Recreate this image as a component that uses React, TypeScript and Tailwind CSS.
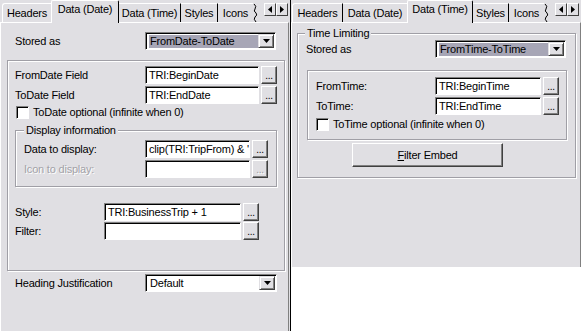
import React from "react";

const BG = "bg-[#e0dfe3]";

function Sunken({ className = "", children }: { className?: string; children?: React.ReactNode }) {
  return (
    <div
      className={`border border-t-[#808080] border-l-[#808080] border-r-white border-b-white shadow-[inset_1px_1px_0_#000] bg-white flex items-center ${className}`}
    >
      {children}
    </div>
  );
}

function Ellipsis({ disabled = false }: { disabled?: boolean }) {
  return (
    <div
      className={`w-[16px] h-[18px] shrink-0 ${BG} border border-t-white border-l-white border-r-[#404040] border-b-[#404040] shadow-[inset_-1px_-1px_0_#808080] flex items-end justify-center pb-[2px] text-[10px] leading-none ${
        disabled ? "text-[#9d9da1] [text-shadow:1px_1px_0_#fff]" : "text-black"
      }`}
    >
      ...
    </div>
  );
}

function DropBtn() {
  return (
    <div
      className={`w-[16px] h-full shrink-0 ${BG} border border-t-[#e0dfe3] border-l-[#e0dfe3] border-r-[#404040] border-b-[#404040] shadow-[inset_1px_1px_0_#fff,inset_-1px_-1px_0_#808080] flex items-center justify-center`}
    >
      <svg width="7" height="4" viewBox="0 0 7 4">
        <path d="M0 0h7L3.5 4z" fill="#000" />
      </svg>
    </div>
  );
}

function Select({ value, highlight = false, className = "" }: { value: string; highlight?: boolean; className?: string }) {
  return (
    <Sunken className={`h-[18px] pl-[2px] pr-[1px] py-[1px] items-stretch ${className}`}>
      <div className={`flex-1 flex items-center pl-[1px] ml-[1px] mt-[1px] ${highlight ? "bg-[#a7a6b6]" : ""}`}>
        {value}
      </div>
      <DropBtn />
    </Sunken>
  );
}

function Field({
  label,
  labelW,
  inputW,
  value = "",
  disabled = false,
  className = "",
}: {
  label: string;
  labelW: string;
  inputW: string;
  value?: string;
  disabled?: boolean;
  className?: string;
}) {
  return (
    <div className={`flex items-center h-[18px] ${className}`}>
      <div className={`${labelW} shrink-0 ${disabled ? "text-[#a3a2a8] [text-shadow:1px_1px_0_#fff]" : ""}`}>{label}</div>
      <Sunken className={`${inputW} h-[18px] pl-[3px] overflow-hidden whitespace-nowrap`}>{value}</Sunken>
      <div className="w-[2px]" />
      <Ellipsis disabled={disabled} />
    </div>
  );
}

function Check({ label, className = "" }: { label: string; className?: string }) {
  return (
    <div className={`flex items-center h-[13px] ${className}`}>
      <div className="w-[13px] h-[13px] bg-white border border-t-[#808080] border-l-[#808080] border-r-white border-b-white shadow-[inset_1px_1px_0_#000]" />
      <span className="ml-[4px]">{label}</span>
    </div>
  );
}

function Group({
  caption,
  className = "",
  captionLeft = "left-[8px]",
  children,
}: {
  caption?: string;
  className?: string;
  captionLeft?: string;
  children?: React.ReactNode;
}) {
  return (
    <div
      className={`relative border border-[#a09fa6] shadow-[inset_1px_1px_0_#fff,1px_1px_0_#fff] ${className}`}
    >
      {caption && (
        <span className={`absolute ${captionLeft} top-[-7px] px-[2px] ${BG} leading-[12px]`}>{caption}</span>
      )}
      {children}
    </div>
  );
}

type TabDef = { label: string; w: string };

function TabStrip({ tabs, active, first }: { tabs: TabDef[]; active: number; first: string }) {
  return (
    <div className="h-[22px] flex items-end relative z-10">
      <div className={first} />
      {tabs.map((t, i) =>
        i === active ? (
          <div
            key={t.label}
            className={`${t.w} h-[23px] -mb-px ${BG} border-l border-t border-white border-r border-r-black rounded-t-[2px] flex justify-center pt-[3px] shrink-0`}
          >
            {t.label}
          </div>
        ) : (
          <div
            key={t.label}
            className={`${t.w} h-[19px] ${BG} border-t border-white ${i === 0 ? "border-l rounded-tl-[3px]" : ""} ${
              i + 1 === active ? "" : "border-r border-r-black"
            } ${i === tabs.length - 1 ? "border-r-0" : ""} flex justify-center pt-[4px] shrink-0`}
          >
            {t.label}
          </div>
        )
      )}
      <svg width="5" height="19" viewBox="0 0 5 19" className="shrink-0">
        <path d="M1 1 Q4 3 2 6 Q0 8 3 10 Q5 12 2 14 Q0 16 3 19" stroke="#000" fill="none" strokeWidth="1" />
      </svg>
      <div className="flex-1" />
      <div className="flex self-start mt-[3px] mr-[2px]">
        {[0, 1].map((k) => (
          <div
            key={k}
            className={`w-[12px] h-[13px] ${BG} border border-t-white border-l-white border-r-[#404040] border-b-[#404040] flex items-center justify-center`}
          >
            <svg width="4" height="7" viewBox="0 0 4 7">
              {k === 0 ? <path d="M4 0v7L0 3.5z" fill="#000" /> : <path d="M0 0v7l4-3.5z" fill="#000" />}
            </svg>
          </div>
        ))}
      </div>
    </div>
  );
}

export default function App() {
  const leftTabs: TabDef[] = [
    { label: "Headers", w: "w-[49px]" },
    { label: "Data (Date)", w: "w-[68px]" },
    { label: "Data (Time)", w: "w-[62px]" },
    { label: "Styles", w: "w-[37px]" },
    { label: "Icons", w: "w-[35px]" },
  ];
  const rightTabs: TabDef[] = [
    { label: "Headers", w: "w-[51px]" },
    { label: "Data (Date)", w: "w-[64px]" },
    { label: "Data (Time)", w: "w-[66px]" },
    { label: "Styles", w: "w-[36px]" },
    { label: "Icons", w: "w-[35px]" },
  ];
  return (
    <div className="w-[581px] h-[331px] flex bg-white font-['Liberation_Sans',Arial,sans-serif] text-[11px] tracking-[-0.2px] leading-none text-black overflow-hidden">
      {/* Left panel */}
      <div className={`w-[290px] h-[331px] ${BG} flex flex-col shrink-0`}>
        <TabStrip tabs={leftTabs} active={1} first="w-[2px]" />
        <div className="w-[289px] flex-1 border-l border-t border-white border-r border-r-[#808080] flex flex-col">
          <div className="flex items-center mt-[9px] ml-[14px]">
            <div className="w-[130px]">Stored as</div>
            <Select value="FromDate-ToDate" highlight className="w-[131px]" />
          </div>
          <Group className="mt-[10px] ml-[6px] w-[278px] h-[211px] flex flex-col">
            <Field className="mt-[5px] ml-[7px]" label="FromDate Field" labelW="w-[130px]" inputW="w-[114px]" value="TRI:BeginDate" />
            <Field className="mt-[2px] ml-[7px]" label="ToDate Field" labelW="w-[130px]" inputW="w-[114px]" value="TRI:EndDate" />
            <Check className="mt-[2px] ml-[8px]" label="ToDate optional (infinite when 0)" />
            <Group caption="Display information" className="mt-[11px] ml-[7px] w-[262px] h-[57px] flex flex-col">
              <Field className="mt-[9px] ml-[8px]" label="Data to display:" labelW="w-[121px]" inputW="w-[105px]" value="clip(TRI:TripFrom) & '" />
              <Field className="mt-[2px] ml-[8px]" label="Icon to display:" labelW="w-[121px]" inputW="w-[105px]" disabled />
            </Group>
            <Field className="mt-[16px] ml-[7px]" label="Style:" labelW="w-[89px]" inputW="w-[137px]" value="TRI:BusinessTrip + 1" />
            <Field className="mt-px ml-[7px]" label="Filter:" labelW="w-[89px]" inputW="w-[137px]" />
          </Group>
          <div className="flex items-center mt-[3px] ml-[14px]">
            <div className="w-[130px]">Heading Justification</div>
            <Select value="Default" className="w-[132px]" />
          </div>
        </div>
      </div>
      {/* Divider */}
      <div className="w-px h-[331px] bg-black shrink-0" />
      {/* Right panel */}
      <div className="w-[290px] shrink-0 flex flex-col">
        <div className={`${BG} h-[267px] flex flex-col`}>
          <TabStrip tabs={rightTabs} active={2} first="w-px" />
          <div className="flex-1 border-l border-t border-white border-r border-r-[#808080] flex flex-col">
            <Group caption="Time Limiting" captionLeft="left-[7px]" className="mt-[10px] ml-[5px] w-[279px] h-[145px] flex flex-col">
              <div className="flex items-center mt-[6px] ml-[8px]">
                <div className="w-[129px]">Stored as</div>
                <Select value="FromTime-ToTime" highlight className="w-[131px]" />
              </div>
              <Group className="mt-[12px] ml-[9px] w-[260px] h-[70px] flex flex-col">
                <Field className="mt-[6px] ml-[8px]" label="FromTime:" labelW="w-[119px]" inputW="w-[106px]" value="TRI:BeginTime" />
                <Field className="mt-[2px] ml-[8px]" label="ToTime:" labelW="w-[119px]" inputW="w-[106px]" value="TRI:EndTime" />
                <Check className="mt-[3px] ml-[8px]" label="ToTime optional (infinite when 0)" />
              </Group>
              <div
                className={`mt-[3px] ml-[54px] w-[151px] h-[24px] ${BG} border border-t-white border-l-white border-r-[#404040] border-b-[#404040] shadow-[inset_-1px_-1px_0_#808080] flex items-center justify-center`}
              >
                <span>
                  <span className="underline">F</span>ilter Embed
                </span>
              </div>
            </Group>
          </div>
        </div>
      </div>
    </div>
  );
}
